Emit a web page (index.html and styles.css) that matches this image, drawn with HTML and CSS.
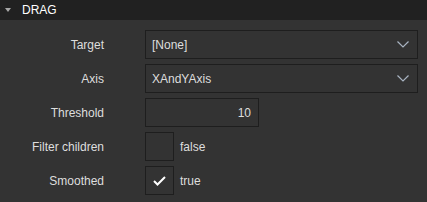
FILE: index.html
```html
<!DOCTYPE html>
<html lang="en">
<head>
	<meta charset="UTF-8">
	<title>Drag</title>
	<link rel="stylesheet" href="styles.css">
</head>
<body>
	<div class="section">
		<div class="header">
			<span class="arrow"></span>
			<span class="title">DRAG</span>
		</div>
		<div class="props">
			<div class="label">Target</div>
			<div class="select">
				<span>[None]</span>
				<svg class="chev" width="12" height="7" viewBox="0 0 12 7"><path d="M0.5 0.5 L6 6 L11.5 0.5" fill="none" stroke="#a9b4c2" stroke-width="1.2"/></svg>
			</div>

			<div class="label">Axis</div>
			<div class="select">
				<span>XAndYAxis</span>
				<svg class="chev" width="12" height="7" viewBox="0 0 12 7"><path d="M0.5 0.5 L6 6 L11.5 0.5" fill="none" stroke="#a9b4c2" stroke-width="1.2"/></svg>
			</div>

			<div class="label">Threshold</div>
			<div class="number">10</div>

			<div class="label">Filter children</div>
			<div class="check">
				<div class="box"></div>
				<span>false</span>
			</div>

			<div class="label">Smoothed</div>
			<div class="check">
				<div class="box">
					<svg width="13" height="10" viewBox="0 0 13 10"><path d="M1 5 L4.5 8.5 L12 1" fill="none" stroke="#ffffff" stroke-width="2"/></svg>
				</div>
				<span>true</span>
			</div>
		</div>
	</div>
</body>
</html>
```

FILE: styles.css
```css
body {
	margin: 0;
	width: 427px;
	height: 202px;
	background-color: #333333;
	font-family: "Liberation Sans", Arial, sans-serif;
	font-size: 12px;
	color: #dedede;
}

.header {
	height: 20px;
	background-color: #212121;
	display: flex;
	align-items: center;
}

.arrow {
	width: 0;
	height: 0;
	margin-left: 5px;
	margin-right: 11px;
	border-left: 3px solid transparent;
	border-right: 3px solid transparent;
	border-top: 4px solid #a8a8a8;
}

.title {
	color: #ffffff;
	font-size: 12px;
}

.props {
	display: grid;
	grid-template-columns: 104px 273px;
	grid-auto-rows: 29px;
	column-gap: 41px;
	row-gap: 5px;
	padding-top: 10px;
}

.label {
	display: flex;
	align-items: center;
	justify-content: flex-end;
}

.select, .number, .box {
	box-sizing: border-box;
	border: 1px solid #1e1e1e;
	background-color: #333333;
}

.select {
	display: flex;
	align-items: center;
	justify-content: space-between;
	padding: 0 8px 0 6px;
}

.number {
	width: 114px;
	display: flex;
	align-items: center;
	justify-content: flex-end;
	padding-right: 7px;
}

.check {
	display: flex;
	align-items: center;
}

.box {
	width: 29px;
	height: 29px;
	display: flex;
	align-items: center;
	justify-content: center;
	margin-right: 6px;
}
```
